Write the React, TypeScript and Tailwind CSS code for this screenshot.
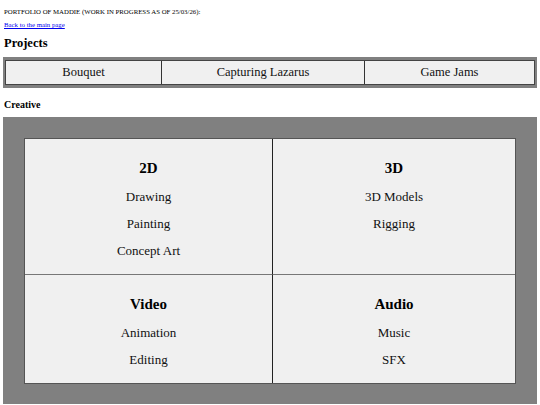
import React from 'react';

const projects = ['Bouquet', 'Capturing Lazarus', 'Game Jams'];

interface CategoryProps {
  title: string;
  items: string[];
  className?: string;
}

function Category({ title, items, className = '' }: CategoryProps) {
  return (
    <div className={`flex flex-col items-center bg-[#f0f0f0] pt-[19px] pb-[15px] ${className}`}>
      <h3 className="text-[15px] font-bold leading-[20px] text-black">{title}</h3>
      {items.map((item) => (
        <p key={item} className="mt-[11px] text-[13px] leading-[16px] text-[#111]">
          {item}
        </p>
      ))}
    </div>
  );
}

export default function App() {
  return (
    <div className="min-h-[405px] bg-white px-[3px] pt-[8px] font-['Liberation_Serif','Times_New_Roman',serif] text-black">
      <p className="ml-[1px] text-[6.8px] leading-[8px]">PORTFOLIO OF MADDIE (WORK IN PROGRESS AS OF 25/03/26):</p>
      <a href="#" className="ml-[1px] mt-[5px] block text-[6.8px] leading-[8px] text-[#0000ee] underline">
        Back to the main page
      </a>
      <h2 className="ml-[1px] mt-[7px] text-[12.5px] font-bold leading-[14px]">Projects</h2>

      <div className="mt-[7px] bg-[#808080] px-[2px] py-[3px]">
        <div className="grid grid-cols-[155px_203px_1fr] border border-[#444] bg-[#f0f0f0]">
          {projects.map((name, i) => (
            <div
              key={name}
              className={`flex h-[23px] items-center justify-center text-[12.5px] text-[#111] ${i > 0 ? 'border-l border-[#333]' : ''}`}
            >
              {name}
            </div>
          ))}
        </div>
      </div>

      <h4 className="ml-[1px] mt-[10px] text-[10px] font-bold leading-[14px]">Creative</h4>

      <div className="mt-[5px] bg-[#808080] px-[21px] pt-[21px] pb-[20px]">
        <div className="grid grid-cols-[248px_1fr] border border-[#555]">
          <Category title="2D" items={['Drawing', 'Painting', 'Concept Art']} className="border-r border-[#222]" />
          <Category title="3D" items={['3D Models', 'Rigging']} />
          <Category title="Video" items={['Animation', 'Editing']} className="border-r border-t border-r-[#222] border-t-[#777]" />
          <Category title="Audio" items={['Music', 'SFX']} className="border-t border-[#777]" />
        </div>
      </div>
    </div>
  );
}
